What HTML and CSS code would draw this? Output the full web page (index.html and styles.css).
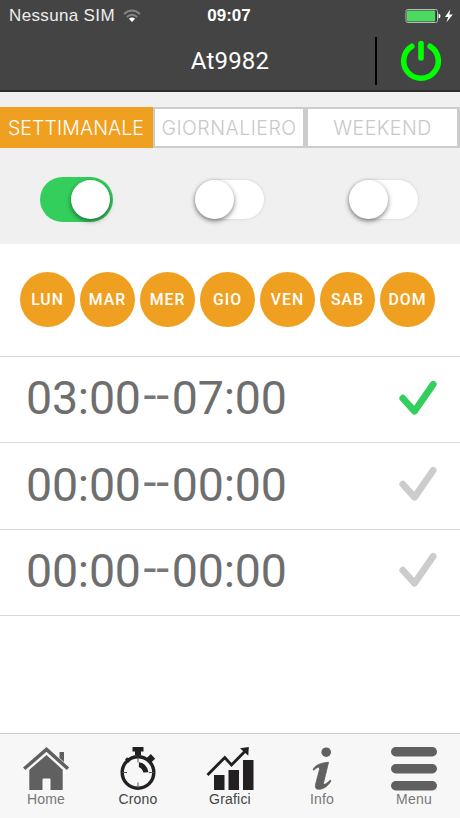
FILE: index.html
```
<!DOCTYPE html>
<html lang="it">

<head>
	<meta charset="utf-8" />
	<meta name="viewport" content="width=device-width, initial-scale=1" />
	<title>At9982</title>
	<link rel="stylesheet" href="styles.css">
</head>

<body>
	<header>
		<div class="status">
			<span class="carrier">Nessuna SIM
				<svg class="wifi" width="18" height="14" viewBox="0 0 18 14">
					<g fill="none" stroke="#858585" stroke-width="2">
						<path d="M1 5Q9 -2 17 5" />
						<path d="M3.8 8Q9 3.5 14.2 8" />
					</g>
					<path d="M9 13L5.9 9.8Q9 7.2 12.1 9.8Z" fill="#fff" />
				</svg>
			</span>
			<span class="clock">09:07</span>
			<span class="battery">
				<svg width="49" height="16" viewBox="0 0 49 16">
					<rect x="1" y="1.5" width="31.5" height="13" rx="1.8" fill="#333" stroke="#bbb" />
					<rect x="2" y="2.5" width="28.2" height="11" rx="0.7" fill="#4cd964" />
					<path d="M33.5 5.5Q35.5 6 35.5 8T33.5 10.5Z" fill="#fff" />
					<path d="M45.3 1.5L40 9H43.2L41.4 14.5L47.8 6.6H44.3Z" fill="#fff" />
				</svg>
			</span>
		</div>
		<div class="titlebar">
			<h1>At9982</h1>
			<button class="power" aria-label="Power">
				<svg width="42" height="42" viewBox="0 0 42 42" fill="none" stroke="#0f0" stroke-width="5.6" stroke-linecap="round">
					<path d="M11.8 6.3A17.3 17.3 0 1 0 30.2 6.3" />
					<path d="M21 3.5V18" />
				</svg>
			</button>
		</div>
	</header>

	<nav class="modes">
		<a class="selected">SETTIMANALE</a>
		<a>GIORNALIERO</a>
		<a>WEEKEND</a>
	</nav>
	<div class="switches">
		<div><span class="switch on"></span></div>
		<div><span class="switch"></span></div>
		<div><span class="switch"></span></div>
	</div>

	<main>
		<div class="days">
			<span>LUN</span>
			<span>MAR</span>
			<span>MER</span>
			<span>GIO</span>
			<span>VEN</span>
			<span>SAB</span>
			<span>DOM</span>
		</div>
		<ul class="slots">
			<li class="active">
				<span class="time">03:00</span><span class="dash">--</span><span class="time">07:00</span>
				<svg class="check" width="38" height="36" viewBox="0 0 38 36"><path d="M3.8 18.2L15.5 31.2L34.2 4.3" /></svg>
			</li>
			<li>
				<span class="time">00:00</span><span class="dash">--</span><span class="time">00:00</span>
				<svg class="check" width="38" height="36" viewBox="0 0 38 36"><path d="M3.8 18.2L15.5 31.2L34.2 4.3" /></svg>
			</li>
			<li>
				<span class="time">00:00</span><span class="dash">--</span><span class="time">00:00</span>
				<svg class="check" width="38" height="36" viewBox="0 0 38 36"><path d="M3.8 18.2L15.5 31.2L34.2 4.3" /></svg>
			</li>
		</ul>
	</main>

	<footer>
		<a>
			<svg width="48" height="44" viewBox="0 0 48 44" fill="#606060">
				<path d="M37.5 5H42V15L37.5 11Z" />
				<path d="M2.2 21.8L24.5 2.4L46 21.8" fill="none" stroke="#606060" stroke-width="3.5" />
				<path d="M7.3 22.8L24.5 8L40.7 22.8V43H28.5V32.5Q28.5 31.5 27.5 31.5H21.5Q20.5 31.5 20.5 32.5V43H7.3Z" />
			</svg>
			Home
		</a>
		<a class="current">
			<svg width="48" height="44" viewBox="-1 0 48 44" fill="#222021">
				<path d="M17.5 0H28.5V4.5H26V8H20V4.5H17.5Z" />
				<path d="M35.8 7L40.2 11.8L35.8 15.8L31.5 11.2Z" />
				<circle cx="23" cy="25.5" r="15.8" fill="none" stroke="#222021" stroke-width="3.4" />
				<path d="M23 10V15.5M23 35.5V41M7 25.5H12M34 25.5H39" stroke="#555" fill="none" />
				<path d="M11 11.5L14.5 14.5" stroke="#222021" stroke-width="3" />
				<path d="M24 15.2Q32.2 16.5 33.5 25.2L28.3 25.5Q27.5 21.7 23.8 20Z" />
			</svg>
			Crono
		</a>
		<a class="current">
			<svg width="48" height="44" viewBox="0 0 48 44" fill="#222021">
				<path d="M8 28H18.5V43H8ZM22.5 23H33V43H22.5ZM37 13H47.5V43H37Z" />
				<path d="M1.5 28L18.8 10.5L25.5 18L39.5 3.8" fill="none" stroke="#222021" stroke-width="2.9" />
				<path d="M34 1.2L42.8 0L42.3 8.8Z" />
			</svg>
			Grafici
		</a>
		<a>
			<svg width="48" height="44" viewBox="-4 0 48 44" fill="#606060">
				<ellipse cx="24.2" cy="5.2" rx="4.8" ry="4.8" />
				<path d="M11 22.5C13.5 17.8 18 16.2 26.5 15.2Q25.5 20 21.6 35.5C21 38.5 23.8 37.7 28.3 33L29 34C25.5 39.5 21.5 42.3 16.6 42.3C13.4 42.3 13 40 13.6 37.2L17.4 22.7C18.3 19.1 15.5 19.6 11.8 23.2Z" stroke="#606060" stroke-width="0.8" />
			</svg>
			Info
		</a>
		<a>
			<svg width="48" height="44" viewBox="0 0 48 44" fill="#606060">
				<rect x="1" y="0" width="46" height="9.4" rx="4.7" />
				<rect x="1" y="17" width="46" height="9.4" rx="4.7" />
				<rect x="1" y="34" width="46" height="9.4" rx="4.7" />
			</svg>
			Menu
		</a>
	</footer>
</body>

</html>
```

FILE: styles.css
```
* {
	box-sizing: border-box;
}

body {
	margin: 0;
	height: 818px;
	display: flex;
	flex-direction: column;
	background: #fff;
	font-family: "Liberation Sans", Arial, sans-serif;
	overflow: hidden;
}

svg {
	display: block;
}

header {
	height: 92px;
	background: #444;
	border-bottom: 2px solid #2c2c2c;
	color: #fff;
}

.status {
	display: grid;
	grid-template-columns: 1fr auto 1fr;
	height: 31px;
	padding: 0 6px 0 9px;
	align-items: center;
	font-size: 17px;
}

.carrier {
	display: flex;
	align-items: center;
	gap: 8px;
	color: #eee;
	letter-spacing: 0.35px;
}

.clock {
	margin: 0 5px 0 0;
	font-weight: bold;
}

.battery {
	justify-self: end;
}

.titlebar {
	display: grid;
	grid-template-columns: 1fr auto 1fr;
	height: 59px;
	align-items: center;
}

h1 {
	grid-column: 2;
	margin: 0;
	font: 400 24px Roboto, sans-serif;
	letter-spacing: 0.2px;
}

.power {
	justify-self: end;
	width: 85px;
	height: 48px;
	margin-top: 1px;
	padding: 0 0 0 23px;
	border: 0;
	border-left: 2px solid #000;
	background: none;
}

.modes {
	display: grid;
	grid-template-columns: 153px 153px 154px;
	height: 56px;
	padding-top: 15px;
	background: #f0f0f0;
}

.modes a {
	display: flex;
	align-items: center;
	justify-content: center;
	border: 2px solid #ccc;
	border-right-width: 3px;
	background: #fff;
	color: #c8c8c8;
	font: 300 19.5px Inter, sans-serif;
	letter-spacing: 0.5px;
}

.modes .selected {
	border-color: #f0a020;
	background: #f0a020;
	color: #fff;
	letter-spacing: 0.1px;
}

.switches {
	display: grid;
	grid-template-columns: 153px 153px 154px;
	height: 96px;
	padding-top: 29px;
	background: #f0f0f0;
}

.switches div {
	display: flex;
	justify-content: center;
}

.switch {
	width: 75px;
	height: 45px;
	padding: 3px;
	border-radius: 23px;
}

.switch::before {
	content: "";
	display: block;
	width: 69px;
	height: 39px;
	border-radius: 20px;
	background: #fff;
	box-shadow: 0 0 3px #ccc;
}

.switch::after {
	content: "";
	display: block;
	width: 39px;
	height: 39px;
	margin-top: -39px;
	border-radius: 50%;
	background: #fff;
	box-shadow: 0 2px 5px rgba(0, 0, 0, 0.5);
}

.switch.on {
	width: 73px;
	background: #34ce5d;
}

.switch.on::before {
	visibility: hidden;
}

.switch.on::after {
	margin-left: 28px;
}

main {
	flex: 1;
}

.days {
	display: flex;
	gap: 5px;
	height: 112px;
	padding: 28px 20px 0;
}

.days span {
	width: 55px;
	height: 55px;
	border-radius: 50%;
	background: #f0a020;
	color: #fff;
	font: 500 15.8px/55px Roboto, sans-serif;
	letter-spacing: 1px;
	text-align: center;
}

.slots {
	margin: 0;
	padding: 0;
	border-top: 1.5px solid #d8d8d8;
	list-style: none;
}

.slots li {
	display: flex;
	align-items: center;
	height: 86.4px;
	padding: 0 23px 0 26px;
	border-bottom: 1.5px solid #d8d8d8;
	color: #6e6e6e;
	font: 400 46.5px Roboto, sans-serif;
}

.time {
	margin-top: -3px;
	letter-spacing: -0.2px;
}

.dash {
	width: 31px;
	margin-top: -9px;
	color: #777;
	text-align: center;
}

.check {
	margin-left: auto;
	margin-top: -4px;
	fill: none;
	stroke: #ccc;
	stroke-width: 6.8;
	stroke-linecap: round;
	stroke-linejoin: round;
}

.active .check {
	stroke: #34ce5d;
}

footer {
	display: grid;
	grid-template-columns: repeat(5, 1fr);
	height: 85px;
	padding-top: 13px;
	border-top: 1.5px solid #ccc;
	background: #f7f7f7;
}

footer a {
	display: flex;
	flex-direction: column;
	align-items: center;
	color: #777;
	font-size: 14px;
	line-height: 16px;
	letter-spacing: 0.2px;
}

footer .current {
	color: #444;
}
```
